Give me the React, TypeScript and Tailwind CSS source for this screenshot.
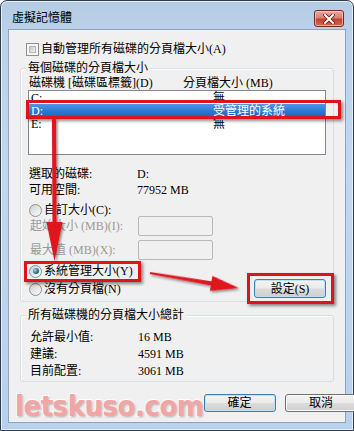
import React from "react";

const T = "font-['Liberation_Serif','Noto_Sans_CJK_TC',serif] text-[12px] leading-[14px] text-black";

function CheckBox() {
  return (
    <div className="w-[13px] h-[13px] border border-[#8e8f8f] bg-[#f7f7f7] p-[2px] shrink-0">
      <div className="w-full h-full bg-gradient-to-br from-[#c4c6c9] to-[#f2f2f2] border border-[#b4b6b8]" />
    </div>
  );
}

function Radio({ checked }: { checked?: boolean }) {
  return (
    <div className="w-[13px] h-[13px] rounded-full border border-[#8e8f8f] bg-gradient-to-br from-[#cfd1d4] to-[#fbfbfb] flex items-center justify-center shrink-0">
      {checked && (
        <div className="w-[6px] h-[6px] rounded-full bg-[radial-gradient(circle_at_35%_35%,#a8d6f2,#2c6a94_55%,#173d5a_100%)]" />
      )}
    </div>
  );
}

function Btn({ children, def, w }: { children: React.ReactNode; def?: boolean; w: string }) {
  return (
    <div
      className={
        "h-[18px] rounded-[3px] border flex items-center justify-center bg-[linear-gradient(#f3f3f3_0%,#ebebeb_48%,#dcdcdc_52%,#cfcfcf_100%)] " +
        (def
          ? "border-[#3c7fb1] shadow-[inset_0_0_0_1px_#b9e3f8] "
          : "border-[#707070] shadow-[inset_0_0_0_1px_#fbfbfb] ") +
        w
      }
    >
      <span className={T}>{children}</span>
    </div>
  );
}

function Input() {
  return <div className="w-[75px] h-[20px] border border-[#b8b8b8] rounded-[2px] bg-[#f0f0f0]" />;
}

export default function App() {
  return (
    <div className="relative w-[354px] h-[431px] overflow-hidden bg-white">
      <div className="w-full h-full rounded-t-[7px] border border-[#2f3e50] bg-[linear-gradient(180deg,#b4cbe4_0%,#bcd2ea_8%,#c2d7ee_40%,#b8d1ec_100%)] flex flex-col shadow-[inset_0_0_0_1px_#e4eef8]">
        {/* title bar */}
        <div className="h-[28px] flex items-start justify-between shrink-0">
          <div className={"pl-[11px] pt-[10px] " + T}>虛擬記憶體</div>
          <div className="mt-[9px] mr-[9px] w-[30px] h-[17px] rounded-[3px] border border-[#6e2a22] bg-[linear-gradient(180deg,#e9a99a_0%,#d8806e_45%,#c2412f_55%,#cf6a4c_100%)] shadow-[inset_0_0_0_1px_rgba(255,220,210,0.6)] flex items-center justify-center">
            <svg width="12" height="10" viewBox="0 0 12 10">
              <path d="M2 1 L10 9 M10 1 L2 9" stroke="#5a1a12" strokeWidth="3.6" strokeLinecap="square" />
              <path d="M2 1 L10 9 M10 1 L2 9" stroke="#ffffff" strokeWidth="2" strokeLinecap="square" />
            </svg>
          </div>
        </div>

        {/* client */}
        <div className="mx-[7px] h-[394px] border border-[#8aa5c2] bg-[#f0f0f0] flex flex-col shrink-0">
          {/* checkbox row */}
          <div className="mt-[12px] pl-[17px] h-[14px] flex items-center gap-[2px]">
            <CheckBox />
            <span className={T}>自動管理所有磁碟的分頁檔大小(A)</span>
          </div>

          {/* group 1 */}
          <div className="relative mt-[12px] ml-[11px] w-[314px] border border-[#d5dfe5] rounded-[3px] shadow-[inset_1px_1px_0_#ffffff] pl-[7px] pr-[7px] pt-[7px] pb-[3px] flex flex-col">
            <span className={"absolute -top-[8px] left-[5px] px-[2px] bg-[#f0f0f0] " + T}>每個磁碟的分頁檔大小</span>
            <div className="h-[14px] flex items-center">
              <span className={"w-[155px] pl-[1px] " + T}>磁碟機 [磁碟區標籤](D)</span>
              <span className={T}>分頁檔大小 (MB)</span>
            </div>
            <div className="h-[65px] w-[298px] border border-[#828790] bg-white flex flex-col">
              <div className="h-[13px] flex items-center">
                <span className={"w-[184px] pl-[2px] " + T}>C:</span>
                <span className={T}>無</span>
              </div>
              <div className="h-[13px] flex items-center bg-[linear-gradient(180deg,#4d95e6_0%,#2f7bd8_50%,#1c63c2_100%)]">
                <span className={"w-[184px] pl-[2px] " + T + " !text-white"}>D:</span>
                <span className={T + " !text-white"}>受管理的系統</span>
              </div>
              <div className="h-[13px] flex items-center">
                <span className={"w-[184px] pl-[2px] " + T}>E:</span>
                <span className={T}>無</span>
              </div>
            </div>

            <div className="mt-[11px] h-[16px] flex items-center">
              <span className={"w-[109px] pl-[1px] " + T}>選取的磁碟:</span>
              <span className={T}>D:</span>
            </div>
            <div className="h-[16px] flex items-center">
              <span className={"w-[109px] pl-[1px] " + T}>可用空間:</span>
              <span className={T}>77952 MB</span>
            </div>

            <div className="mt-[6px] h-[12px] pl-[1px] flex items-center gap-[2px]">
              <Radio />
              <span className={T}>自訂大小(C):</span>
            </div>
            <div className="h-[20px] flex items-center">
              <span className={"w-[110px] pl-[2px] " + T + " !text-[#9a9a9a]"}>起始大小 (MB)(I):</span>
              <Input />
            </div>
            <div className="mt-[4px] h-[20px] flex items-center">
              <span className={"w-[110px] pl-[2px] " + T + " !text-[#9a9a9a]"}>最大值 (MB)(X):</span>
              <Input />
            </div>

            <div className="flex items-start justify-between">
              <div className="flex flex-col">
                <div className="mt-[4px] h-[14px] pl-[1px] flex items-center gap-[2px]">
                  <Radio checked />
                  <span className={T}>系統管理大小(Y)</span>
                </div>
                <div className="mt-[4px] h-[14px] pl-[1px] flex items-center gap-[2px]">
                  <Radio />
                  <span className={T}>沒有分頁檔(N)</span>
                </div>
              </div>
              <div className="mt-[19px]">
                <Btn def w="w-[72px] h-[19px]">設定(S)</Btn>
              </div>
            </div>
          </div>

          {/* group 2 */}
          <div className="relative mt-[13px] ml-[11px] w-[314px] border border-[#d5dfe5] rounded-[3px] shadow-[inset_1px_1px_0_#ffffff] pl-[9px] pt-[12px] pb-[2px] flex flex-col">
            <span className={"absolute -top-[8px] left-[5px] px-[2px] bg-[#f0f0f0] " + T}>所有磁碟機的分頁檔大小總計</span>
            <div className="h-[17px] flex items-center">
              <span className={"w-[108px] " + T}>允許最小值:</span>
              <span className={T}>16 MB</span>
            </div>
            <div className="h-[17px] flex items-center">
              <span className={"w-[108px] " + T}>建議:</span>
              <span className={T}>4591 MB</span>
            </div>
            <div className="h-[17px] flex items-center">
              <span className={"w-[108px] " + T}>目前配置:</span>
              <span className={T}>3061 MB</span>
            </div>
          </div>

          {/* bottom row */}
          <div className="mt-[9px] pr-[9px] pl-[6px] flex items-center justify-between">
            <span className="font-['Liberation_Sans_Narrow','DejaVu_Sans_Condensed','Liberation_Sans',sans-serif] font-bold text-[29px] leading-[30px] tracking-[-0.5px] text-[#f2a5a5] [-webkit-text-stroke:2px_#ffffff] [paint-order:stroke_fill] [text-shadow:1px_1px_2px_rgba(0,0,0,0.3)]">
              letskuso.com
            </span>
            <div className="flex items-center gap-[9px] -mt-[6px]">
              <Btn def w="w-[72px]">確定</Btn>
              <Btn w="w-[73px]">取消</Btn>
            </div>
          </div>
        </div>
      </div>

      {/* annotations overlay */}
      <div className="absolute left-[26px] top-[100px] w-[315px] h-[19px] border-[3px] border-[#e0121b] shadow-[2px_2px_3px_rgba(0,0,0,0.45)] pointer-events-none" />
      <div className="absolute left-[24px] top-[261px] w-[117px] h-[21px] border-[3px] border-[#e0121b] shadow-[2px_2px_3px_rgba(0,0,0,0.45)] pointer-events-none" />
      <div className="absolute left-[247px] top-[273px] w-[87px] h-[31px] border-[3px] border-[#e0121b] shadow-[2px_2px_3px_rgba(0,0,0,0.45)] pointer-events-none" />
      <svg className="absolute left-0 top-0 pointer-events-none" width="354" height="431" viewBox="0 0 354 431">
        <defs>
          <filter id="sh" x="-20%" y="-20%" width="140%" height="140%">
            <feDropShadow dx="1.5" dy="1.5" stdDeviation="1.2" floodColor="#000" floodOpacity="0.45" />
          </filter>
        </defs>
        <polygon
          points="52,119 56,119 56.5,222 62.5,222 54.5,261 46.5,222 52.5,222"
          fill="#e0121b"
          filter="url(#sh)"
        />
        <g transform="translate(150,273) rotate(9.6)" filter="url(#sh)">
          <polygon points="0,-1 62,-2 62,-7.5 90,0 62,7.5 62,2 0,1" fill="#e0121b" />
        </g>
      </svg>
    </div>
  );
}
